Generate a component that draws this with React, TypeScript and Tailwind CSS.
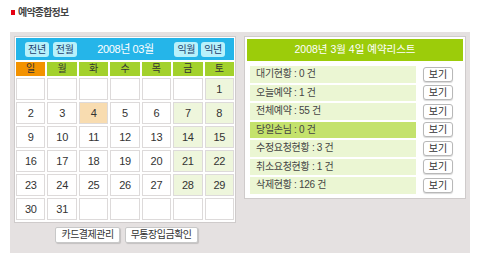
import React from 'react';

const days = ['일', '월', '화', '수', '목', '금', '토'];

const weeks: (number | null)[][] = [
  [null, null, null, null, null, null, 1],
  [2, 3, 4, 5, 6, 7, 8],
  [9, 10, 11, 12, 13, 14, 15],
  [16, 17, 18, 19, 20, 21, 22],
  [23, 24, 25, 26, 27, 28, 29],
  [30, 31, null, null, null, null, null],
];

const summary = [
  { label: '대기현황 : 0 건' },
  { label: '오늘예약 : 1 건' },
  { label: '전체예약 : 55 건' },
  { label: '당일손님 : 0 건', active: true },
  { label: '수정요청현황 : 3 건' },
  { label: '취소요청현황 : 1 건' },
  { label: '삭제현황 : 126 건' },
];

const NavButton: React.FC<{ label: string }> = ({ label }) => (
  <button className="h-[15px] px-[3px] rounded-[3px] bg-[#b8f1fb] text-[#1d3f6e] text-[10px] leading-[15px] tracking-[-0.3px]">
    {label}
  </button>
);

const Calendar: React.FC = () => (
  <div className="w-[222px] border border-[#cfcbcb] bg-white p-[1px] pb-[2px]">
    <div className="h-[22px] bg-[#25b5e9] flex items-center px-[9px]">
      <div className="flex gap-[4px]">
        <NavButton label="전년" />
        <NavButton label="전월" />
      </div>
      <div className="flex-1 text-center text-white text-[11px] tracking-[-0.4px]">2008년 03월</div>
      <div className="flex gap-[3px]">
        <NavButton label="익월" />
        <NavButton label="익년" />
      </div>
    </div>
    <div className="grid grid-cols-7 gap-[2px] mt-[2px]">
      {days.map((d, i) => (
        <div
          key={d}
          className={`h-[14px] text-center text-[10px] leading-[14px] text-[#333] ${i === 0 ? 'bg-[#f39200]' : 'bg-[#a3d12c]'}`}
        >
          {d}
        </div>
      ))}
      {weeks.flat().map((n, i) => {
        const col = i % 7;
        let bg = 'bg-white';
        if (n === 4) bg = 'bg-[#f8dcb0]';
        else if (n !== null && col >= 5) bg = 'bg-[#eef6dc]';
        return (
          <div
            key={i}
            className={`h-[22px] border border-[#dddada] text-center text-[11px] leading-[20px] text-[#333] tracking-[-0.3px] ${bg}`}
          >
            {n ?? ''}
          </div>
        );
      })}
    </div>
  </div>
);

const BottomButton: React.FC<{ label: string }> = ({ label }) => (
  <button className="h-[16px] px-[5px] bg-white border border-[#c8c8c8] rounded-[2px] shadow-[1px_1px_1px_rgba(0,0,0,0.15)] text-[10px] leading-[14px] tracking-[-0.5px] text-[#333]">
    {label}
  </button>
);

const ReservationList: React.FC = () => (
  <div className="w-[222px] h-[163px] border border-[#cfcbcb] bg-white p-[2px]">
    <div className="h-[22px] bg-[#9ccc0a] flex items-center justify-center text-white text-[10.5px]">
      2008년 3월 4일 예약리스트
    </div>
    <div className="flex flex-col gap-[2px] mt-[5px] pl-[3px]">
      {summary.map(s => (
        <div key={s.label} className="flex items-center gap-[7px] h-[16.5px]">
          <div
            className={`w-[166px] h-full pl-[6px] text-[10px] leading-[16.5px] tracking-[-0.3px] text-[#444] ${s.active ? 'bg-[#c4e26c]' : 'bg-[#ebf6d3]'}`}
          >
            {s.label}
          </div>
          <button className="w-[30px] h-[15px] bg-white border border-[#b8b8b8] rounded-[3px] shadow-[0_1px_1px_rgba(0,0,0,0.15)] text-[10px] leading-[13px] text-[#333]">
            보기
          </button>
        </div>
      ))}
    </div>
  </div>
);

export default function App() {
  return (
    <div
      className="w-[480px] h-[264px] bg-white"
      style={{ fontFamily: '"Liberation Sans", "Noto Sans CJK KR", sans-serif' }}
    >
      <div className="flex items-center h-[24px] pl-[11px] pt-[1px]">
        <span className="w-[4px] h-[5px] bg-[#e60012] mr-[3px]" />
        <span className="text-[10px] font-bold text-[#444] tracking-[-0.8px]">예약종합정보</span>
      </div>
      <div className="ml-[10px] mt-[8px] w-[460px] h-[221px] bg-[#e5e1e1] p-[4px] flex gap-[8px]">
        <div className="flex flex-col items-center">
          <Calendar />
          <div className="flex gap-[5px] mt-[4px] pl-[3px]">
            <BottomButton label="카드결제관리" />
            <BottomButton label="무통장입금확인" />
          </div>
        </div>
        <ReservationList />
      </div>
    </div>
  );
}
